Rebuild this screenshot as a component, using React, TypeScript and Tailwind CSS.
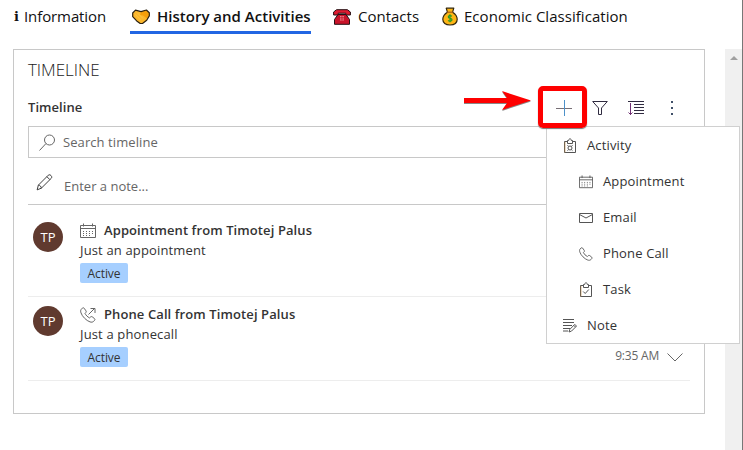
import React from 'react';

type IconProps = { className?: string };

const svgBase = {
  fill: 'none',
  stroke: 'currentColor',
  strokeWidth: 1,
} as const;

function Handshake() {
  return (
    <svg viewBox="0 0 18 16" className="h-4 w-[18px] shrink-0" strokeLinejoin="round">
      <path d="M3.500 1.200.7 4v3.700l4 4.200 3.500 2.600h2.300l4.200-3.300 2.600-4.300L17.300 3.700 14.400 1 9 2.600z" fill="#fbb62c" />
      <path d="M9 3.200 14.200 1.200 17 4l-.6 3.700-1.800 1.500L11 6.500 8 6z" fill="#f59f0a" />
      <path d="m3.500 5.500 5 5.500m-3.500-7.500 6 6" stroke="#ffc942" strokeWidth=".8" />
      <path d="M3.500 1.200.7 4v3.700l4 4.200 3.500 2.600h2.300l4.200-3.300 2.600-4.300V3.700L14.400 1 9 2.600z" fill="none" stroke="#2a2010" strokeWidth="1.200" />
    </svg>
  );
}

function RedPhone() {
  return (
    <svg viewBox="0 0 18 16" className="h-4 w-[18px] shrink-0" stroke="#251014" strokeWidth="1" strokeLinejoin="round">
      <path d="M5 5.500h8l3.500 5v4.800h-15v-4.800z" fill="#c9142a" />
      <path d="M.6 6V3l3-2.300h10.800l3 2.300v3h-4.600V4.200H5.200V6z" fill="#df1b30" />
      <path d="M7 7h4v4.500H7z" fill="#f08e93" stroke="none" />
      <path d="M7 8.500h4M7 10h4M8.300 7v4.500M9.800 7v4.500" stroke="#c31327" strokeWidth=".6" />
    </svg>
  );
}

function MoneyBag() {
  return (
    <svg viewBox="0 0 16 19" className="h-[19px] w-4 shrink-0" stroke="#33280c" strokeWidth="1.200" strokeLinejoin="round">
      <path d="M4.200 1.200h7.600L10.600 5.200C13.500 7 15.200 9.500 15.200 12.300c0 3.600-2.700 5.700-7.200 5.700S.8 15.900.8 12.300C.8 9.500 2.500 7 5.400 5.200z" fill="#fdb515" />
      <path d="M5 5.200h6" stroke="#a65d12" />
      <path d="M10 9.200C8 8 6.300 8.700 6.300 9.900c0 2 3.700 1 3.700 2.900 0 1.400-2.300 1.800-4 .7M8 7.300v8" fill="none" stroke="#269a24" />
    </svg>
  );
}

function Calendar({ className }: IconProps) {
  return (
    <svg viewBox="0 0 16 16" className={className} {...svgBase}>
      <path d="M.5 2.500h15v12H.5zM.5 5.500h15M3.500.5v3M12.500.5v3" />
      <path d="M3 8.500h10M3 10.500h10M3 12.500h7" strokeDasharray="1 2" />
    </svg>
  );
}

function Clipboard({ className, task = false }: IconProps & { task?: boolean }) {
  return (
    <svg viewBox="0 0 14 16" className={className} {...svgBase}>
      <path d="M4 3.500H1.500v11h11v-11H10M4.500 5.500v-3h1.200C5.700.2 8.300.2 8.300 2.500h1.200v3z" />
      <path d="M2 4v10.500" stroke="#c08a45" strokeWidth=".6" />
      {task ? <path d="m4.200 9.500 2 2 3.600-4" /> : (
        <>
          <circle cx="7" cy="10" r="2" />
          <path d="M4.500 7.200 5.700 8.500M9.500 7.200 8.300 8.500M4.500 12.700l1.200-1.200m3.800 1.200-1.200-1.200" />
        </>
      )}
    </svg>
  );
}

function Envelope() {
  return (
    <svg viewBox="0 0 14 10" className="h-[10px] w-[14px]" {...svgBase}>
      <path d="M.5.5h13v9H.5zM.5 1.500 7 5l6.500-3.500" />
    </svg>
  );
}

function Phone({ className, outgoing = false }: IconProps & { outgoing?: boolean }) {
  return (
    <svg viewBox="0 0 16 16" className={className} {...svgBase} strokeLinejoin="round">
      <path d="M4.100 1.200c-.5-.6-1.200-.6-1.700-.1L1.200 2.400C.5 3.200.5 4.500 1 5.900c1.200 3.600 5.400 7.800 9 9 1.500.5 2.700.3 3.600-.5l1-1.100c.5-.5.4-1.200-.1-1.700l-2.300-1.800c-.6-.4-1.200-.3-1.700.2l-.9.9C7.500 9.900 6 8.400 5 6.400l.8-.8c.5-.5.6-1.100.2-1.700z" />
      {outgoing && <path d="m8.500 7.500 6.500-6.500M10.500 1.500h4.500v4.500" />}
    </svg>
  );
}

function Note() {
  return (
    <svg viewBox="0 0 14 14" className="h-[14px] w-[14px]" {...svgBase}>
      <path d="M0 .5h11M0 3.500h11M0 6.500h9M0 9.500h7M0 12h5" />
      <path d="m6 13 .8-2.600 5-5 1.700 1.700-5 5zM10.800 6.400l1.700 1.700" />
    </svg>
  );
}

function Pencil() {
  return (
    <svg viewBox="0 0 18 18" className="h-[17px] w-[17px] shrink-0" {...svgBase}>
      <path d="m1.200 16.800 1.300-5L13 1.300c1.700-1.700 4.900 1.500 3.200 3.200L5.700 15zM11.500 2.800l3.200 3.200M2.500 11.800c1.800.2 3 1.400 3.200 3.200" />
    </svg>
  );
}

type Entry = { title: string; text: string; icon: React.ReactNode; className: string; time?: string };

const entries: Entry[] = [
  { title: 'Appointment from Timotej Palus', text: 'Just an appointment', icon: <Calendar className="h-4 w-4" />, className: 'h-[92px] pt-4' },
  { title: 'Phone Call from Timotej Palus', text: 'Just a phonecall', icon: <Phone className="h-4 w-4" outgoing />, className: 'h-[84px] pt-2', time: '9:35 AM' },
];

function TimelineEntry({ entry }: { entry: Entry }) {
  return (
    <article className={`flex border-b border-[#ededed] pl-[5px] ${entry.className}`}>
      <div className="mt-[1px] flex h-[30px] w-[30px] items-center justify-center rounded-full bg-[#603a2f] pt-[1px] text-[13px] text-white">TP</div>
      <div className="ml-[17px] flex flex-col items-start">
        <div className="flex h-[19px] items-center gap-2 text-[#666]">
          {entry.icon}
          <h3 className="text-[13px] font-semibold tracking-[0.1px] text-[#333]">{entry.title}</h3>
        </div>
        <p className="h-5 text-[13px] leading-5 tracking-[0.15px]">{entry.text}</p>
        <span className="mt-[3px] flex h-5 w-12 items-center justify-center rounded-[2px] bg-[#a6cfff] pt-[1px] text-[12px] tracking-[-0.1px]">Active</span>
      </div>
      {entry.time && (
        <div className="mt-[41px] ml-auto flex h-5 items-center pr-[7px] text-[#666]">
          <time className="text-[12px] tracking-[-0.2px]">{entry.time}</time>
          <svg viewBox="0 0 16 9" className="mt-[3px] ml-2 h-[9px] w-4" {...svgBase}><path d="m.5.5 7.500 7.500L15.500.5" /></svg>
        </div>
      )}
    </article>
  );
}

const menuItems = [
  { label: 'Activity', nested: false, icon: <Clipboard className="h-4 w-[14px]" /> },
  { label: 'Appointment', nested: true, icon: <Calendar className="h-[14px] w-[14px]" /> },
  { label: 'Email', nested: true, icon: <Envelope /> },
  { label: 'Phone Call', nested: true, icon: <Phone className="h-[14px] w-[14px]" /> },
  { label: 'Task', nested: true, icon: <Clipboard className="h-4 w-[14px]" task /> },
  { label: 'Note', nested: false, icon: <Note /> },
];

export default function App() {
  return (
    <div className="relative flex h-[450px] w-[743px] flex-col overflow-hidden border-r border-[#777] bg-white font-['Open_Sans','Noto_Sans',sans-serif] text-[#333]">
      <nav className="flex h-[49px] shrink-0 items-start pl-[13px] text-[15px] text-[#111]">
        <div className="flex h-[33px] w-[117px] items-center gap-1">
          <span className="w-[7px] text-center font-['DejaVu_Serif',serif] text-[13px] font-bold">i</span>
          <span className="tracking-[-0.1px]">Information</span>
        </div>
        <div className="flex h-[34px] w-[181px] items-center gap-[7px] border-b-[3px] border-[#2266e3] pl-[2px] pt-[2px] font-semibold whitespace-nowrap">
          <Handshake />
          <span className="tracking-[0.01px]">History and Activities</span>
        </div>
        <div className="ml-[22px] flex h-[33px] w-[109px] items-center gap-[7px]">
          <RedPhone />
          <span>Contacts</span>
        </div>
        <div className="flex h-[33px] items-center gap-[6px] whitespace-nowrap">
          <MoneyBag />
          <span className="tracking-[0.04px]">Economic Classification</span>
        </div>
      </nav>

      <div className="flex min-h-0 flex-1 justify-between pl-[13px]">
        <main className="h-[365px] w-[692px] border border-[#c8c8c8] px-[14px]">
          <h1 className="h-10 text-[17px] leading-10 font-light tracking-[-0.05px] text-[#222]">TIMELINE</h1>
          <header className="flex h-9 items-center justify-between">
            <h2 className="text-[13px] font-semibold tracking-[0.05px]">Timeline</h2>
            <div className="flex items-center gap-5 pr-[10px] text-[#302b40]">
              <svg viewBox="0 0 16 16" className="h-4 w-4" {...svgBase}><path d="M0 8.500h16" stroke="#776f76" /><path d="M8.500 0v16" stroke="#4d91c9" /></svg>
              <svg viewBox="0 0 16 16" className="h-4 w-4" {...svgBase}><path d="M.7 1.500h14.600L9.500 8v6.500h-3V8z" /></svg>
              <svg viewBox="0 0 16 16" className="h-4 w-4" {...svgBase}><path d="M0 1.500h16M6 4.500h10M6 7.500h10M6 10.500h10M6 13.500h10" /><path d="M2.500 3v12M.5 12.500l2 2 2-2" stroke="#713074" /></svg>
              <svg viewBox="0 0 16 16" className="h-4 w-4" fill="#3f4f68"><path d="M7 1h2v2H7zm0 6h2v2H7zm0 6h2v2H7z" /></svg>
            </div>
          </header>
          <div className="flex h-8 items-center border border-[#c8c8c8] pl-[10px] text-[#666]">
            <svg viewBox="0 0 17 17" className="h-[17px] w-[17px]" {...svgBase}><circle cx="10.500" cy="6" r="5" /><path d="m7 9.500-6.500 7" /></svg>
            <span className="mt-[2px] ml-[7px] text-[13px] tracking-[0.08px]">Search timeline</span>
          </div>
          <div className="flex h-[47px] items-center border-b border-[#c8c8c8] pl-[8px]">
            <div className="mt-[2px]"><Pencil /></div>
            <span className="mt-[12px] ml-[11px] text-[13px] text-[#666]">Enter a note...</span>
          </div>
          {entries.map((entry) => <TimelineEntry key={entry.title} entry={entry} />)}
        </main>
        <aside className="flex w-[17px] justify-center bg-[#f0f0f0] pt-[7px]">
          <div className="h-0 w-0 border-x-4 border-b-4 border-x-transparent border-b-[#a0a0a0]" />
        </aside>
      </div>

      <div role="menu" className="absolute top-[126px] left-[546px] h-[218px] w-[194px] border border-[#d0d0d0] bg-white">
        {menuItems.map((item) => (
          <div key={item.label} role="menuitem" className={`flex h-9 items-center gap-[10px] pt-[2px] text-[13px] tracking-[0.15px] ${item.nested ? 'pl-8' : 'pl-4'}`}>
            <span className="flex w-[14px] justify-center text-[#555]">{item.icon}</span>
            <span>{item.label}</span>
          </div>
        ))}
      </div>
      <div className="absolute top-[86px] left-[538px] h-[42px] w-[49px] rounded-[5px] border-[5px] border-[#fe0000] shadow-[0_1px_1px_#777]" />
      <svg viewBox="0 0 68 22" className="absolute top-[90px] left-[464px] h-[22px] w-[68px] drop-shadow-[0_1px_0_#888]"><path d="M0 8h43L38 1l29 9.500L38 20l5-7H0z" fill="#fe0000" /></svg>
    </div>
  );
}
